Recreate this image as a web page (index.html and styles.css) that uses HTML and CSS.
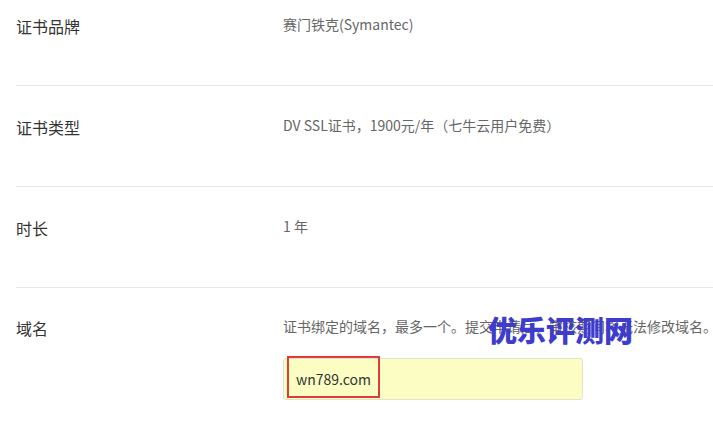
FILE: index.html
```html
<!DOCTYPE html>
<html lang="zh-CN">
<head>
<meta charset="utf-8">
<link rel="stylesheet" href="styles.css">
</head>
<body>
<div class="form">
  <div class="row row-first">
    <div class="label">证书品牌</div>
    <div class="value">赛门铁克(Symantec)</div>
  </div>
  <div class="row">
    <div class="label">证书类型</div>
    <div class="value">DV SSL证书，1900元/年（七牛云用户免费）</div>
  </div>
  <div class="row">
    <div class="label">时长</div>
    <div class="value">1 年</div>
  </div>
  <div class="row row-last">
    <div class="label">域名</div>
    <div class="value value-domain">
      <div class="hint">证书绑定的域名，最多一个。提交申请后，审核期间将无法修改域名。</div>
      <div class="input-wrap">
        <div class="input">wn789.com</div>
        <div class="mark-box"></div>
      </div>
      <div class="watermark">优乐评测网</div>
    </div>
  </div>
</div>
</body>
</html>
```
FILE: styles.css
```css
html, body {
  margin: 0;
  padding: 0;
  background: #fff;
  overflow: hidden;
}
body {
  font-family: "Noto Sans CJK SC", "Noto Sans", sans-serif;
  width: 713px;
  height: 434px;
}
.form {
  padding-left: 16px;
}
.row {
  display: grid;
  grid-template-columns: 267px 1fr;
  align-items: start;
  box-sizing: border-box;
  height: 101px;
  padding-top: 29px;
  border-bottom: 1px solid #e8e8e8;
}
.row-first {
  height: 86px;
  padding-top: 14px;
}
.row-last {
  border-bottom: none;
  height: auto;
  padding-top: 28px;
}
.label {
  font-size: 16px;
  line-height: 24px;
  color: #333;
}
.value {
  font-family: "Noto Sans CJK TC", "Noto Sans CJK SC", sans-serif;
  font-size: 14px;
  line-height: 20px;
  color: #666;
  white-space: nowrap;
}
.value-domain {
  position: relative;
}
.hint {
  margin-bottom: 22px;
}
.input-wrap {
  position: relative;
  width: 300px;
}
.input {
  box-sizing: border-box;
  height: 42px;
  width: 300px;
  background: #fbfdc3;
  border: 1px solid #e2e2cf;
  border-radius: 3px;
  padding-left: 12px;
  font-size: 14px;
  line-height: 40px;
  color: #333;
}
.mark-box {
  position: absolute;
  left: 4px;
  top: -2px;
  width: 93px;
  height: 42px;
  box-sizing: border-box;
  border: 2px solid #de3b3b;
}
.watermark {
  position: absolute;
  left: 205px;
  top: -4px;
  font-family: "Noto Sans CJK SC", sans-serif;
  font-size: 29px;
  line-height: 34px;
  font-weight: 900;
  color: #3d3ccc;
}
```
